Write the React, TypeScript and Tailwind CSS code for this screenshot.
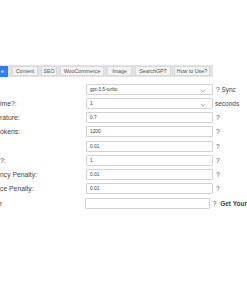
import React from "react";

const Chevron = () => (
  <svg width="6" height="4" viewBox="0 0 6 4" className="absolute right-[6px] top-[4px]">
    <path d="M0.8 0.8 L3 3 L5.2 0.8" fill="none" stroke="#888" strokeWidth="0.7" />
  </svg>
);

type Row = {
  label: string;
  value: string;
  select?: boolean;
  suffix: React.ReactNode;
};

const rows: Row[] = [
  { label: "", value: "gpt-3.5-turbo", select: true, suffix: <span>? <span>Sync</span></span> },
  { label: "ime?:", value: "1", select: true, suffix: <span className="-ml-[1px]">seconds</span> },
  { label: "rature:", value: "0.7", suffix: "?" },
  { label: "okens:", value: "1200", suffix: "?" },
  { label: "", value: "0.01", suffix: "?" },
  { label: "?:", value: "1", suffix: "?" },
  { label: "ncy Penalty:", value: "0.01", suffix: "?" },
  { label: "ce Penalty:", value: "0.01", suffix: "?" },
  { label: "r", value: "", suffix: <span>? <span className="font-bold ml-[2px]">Get Your</span></span> },
];

const tabs = [
  { name: "Content", w: "w-[26px]" },
  { name: "SEO", w: "w-[16px]" },
  { name: "WooCommerce", w: "w-[44px]" },
  { name: "Image", w: "w-[25px]" },
  { name: "SearchGPT", w: "w-[36px]" },
  { name: "How to Use?", w: "w-[36px]" },
];

export default function App() {
  return (
    <div
      className="w-[247px] h-[296px] overflow-hidden bg-white text-[#333]"
      style={{ fontFamily: '"Liberation Sans", Arial, sans-serif' }}
    >
      <div className="h-[65px]" />
      <div className="flex items-center w-[213px] h-[12px] bg-[#e2e2e2] gap-[3px]">
        <div className="w-[8px] h-[11px] bg-[#2f7ff0] text-white text-[5.5px] leading-[11px] pl-[1px] mr-[1px]">
          e
        </div>
        {tabs.map((t) => (
          <div
            key={t.name}
            className={`${t.w} h-[10px] bg-[#f3f3f3] border border-[#dadada] text-[5.3px] leading-[8px] text-center text-[#555] whitespace-nowrap`}
          >
            {t.name}
          </div>
        ))}
      </div>
      <div className="h-[5px]" />
      <div className="flex flex-col">
        {rows.map((r, i) => (
          <div key={i} className="flex items-center h-[14.25px]">
            <div className="w-[86px] text-[6.8px] leading-[11px] whitespace-nowrap overflow-hidden text-[#444]">
              {r.label}
            </div>
            <div className="relative w-[127px] h-[11px] border border-[#d2d2d2] rounded-[1px] bg-white text-[4.8px] leading-[9px] pl-[3px] text-[#3a3a3a]">
              {r.value}
              {r.select && <Chevron />}
            </div>
            <div className="ml-[3px] text-[6.5px] leading-[11px] whitespace-nowrap text-[#444]">
              {r.suffix}
            </div>
          </div>
        ))}
      </div>
    </div>
  );
}
